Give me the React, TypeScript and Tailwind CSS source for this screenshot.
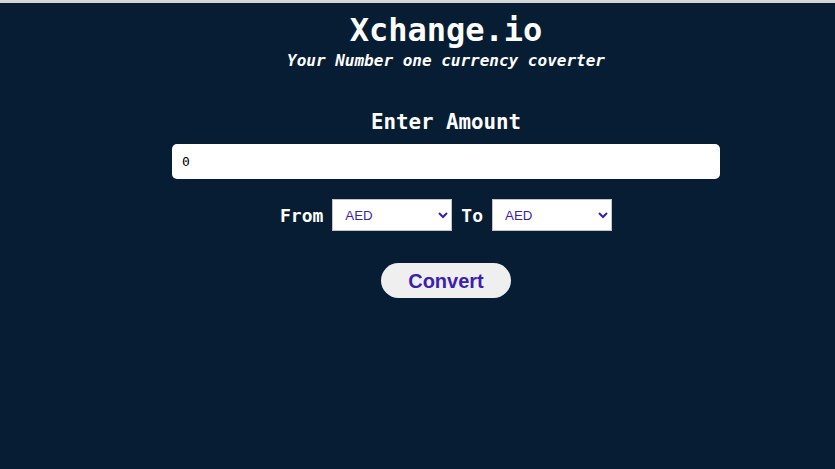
import React from "react";

const currencies = ["AED", "USD", "EUR", "GBP", "INR", "JPY"];

export default function App() {
  const [amount, setAmount] = React.useState("0");
  const [from, setFrom] = React.useState("AED");
  const [to, setTo] = React.useState("AED");

  return (
    <div className="min-h-[469px] bg-[#071d33] border-t-[3px] border-[#d6d6d6] pl-[57px] font-['DejaVu_Sans_Mono',monospace] text-white">
      <div className="flex flex-col items-center">
        <h1 className="mt-[7px] text-[32px] font-bold leading-[40px]">Xchange.io</h1>
        <p className="text-[16px] font-bold italic leading-[20px] mt-[1px]">Your Number one currency coverter</p>

        <h2 className="mt-[38px] text-[20.8px] font-bold leading-[26px]">Enter Amount</h2>
        <input
          value={amount}
          onChange={(e) => setAmount(e.target.value)}
          className="mt-[9px] w-[548px] h-[35px] rounded-[5px] bg-white px-[10px] text-[13px] text-black outline-none font-['DejaVu_Sans_Mono',monospace]"
        />

        <div className="mt-[20px] flex items-center gap-[9px]">
          <span className="text-[18px] font-bold">From</span>
          <select
            value={from}
            onChange={(e) => setFrom(e.target.value)}
            className="w-[120px] h-[32px] bg-white border border-[#c4c4c4] px-[8px] text-[13.3px] text-[#3b1fb0] font-['Liberation_Sans',Arial,sans-serif]"
          >
            {currencies.map((c) => (
              <option key={c}>{c}</option>
            ))}
          </select>
          <span className="text-[18px] font-bold">To</span>
          <select
            value={to}
            onChange={(e) => setTo(e.target.value)}
            className="w-[120px] h-[32px] bg-white border border-[#c4c4c4] px-[8px] text-[13.3px] text-[#3b1fb0] font-['Liberation_Sans',Arial,sans-serif]"
          >
            {currencies.map((c) => (
              <option key={c}>{c}</option>
            ))}
          </select>
        </div>

        <button className="mt-[32px] w-[130px] h-[35px] rounded-full bg-[#efefef] text-[20px] font-bold text-[#3b1fb0] font-['Liberation_Sans',Arial,sans-serif]">
          Convert
        </button>
      </div>
    </div>
  );
}
